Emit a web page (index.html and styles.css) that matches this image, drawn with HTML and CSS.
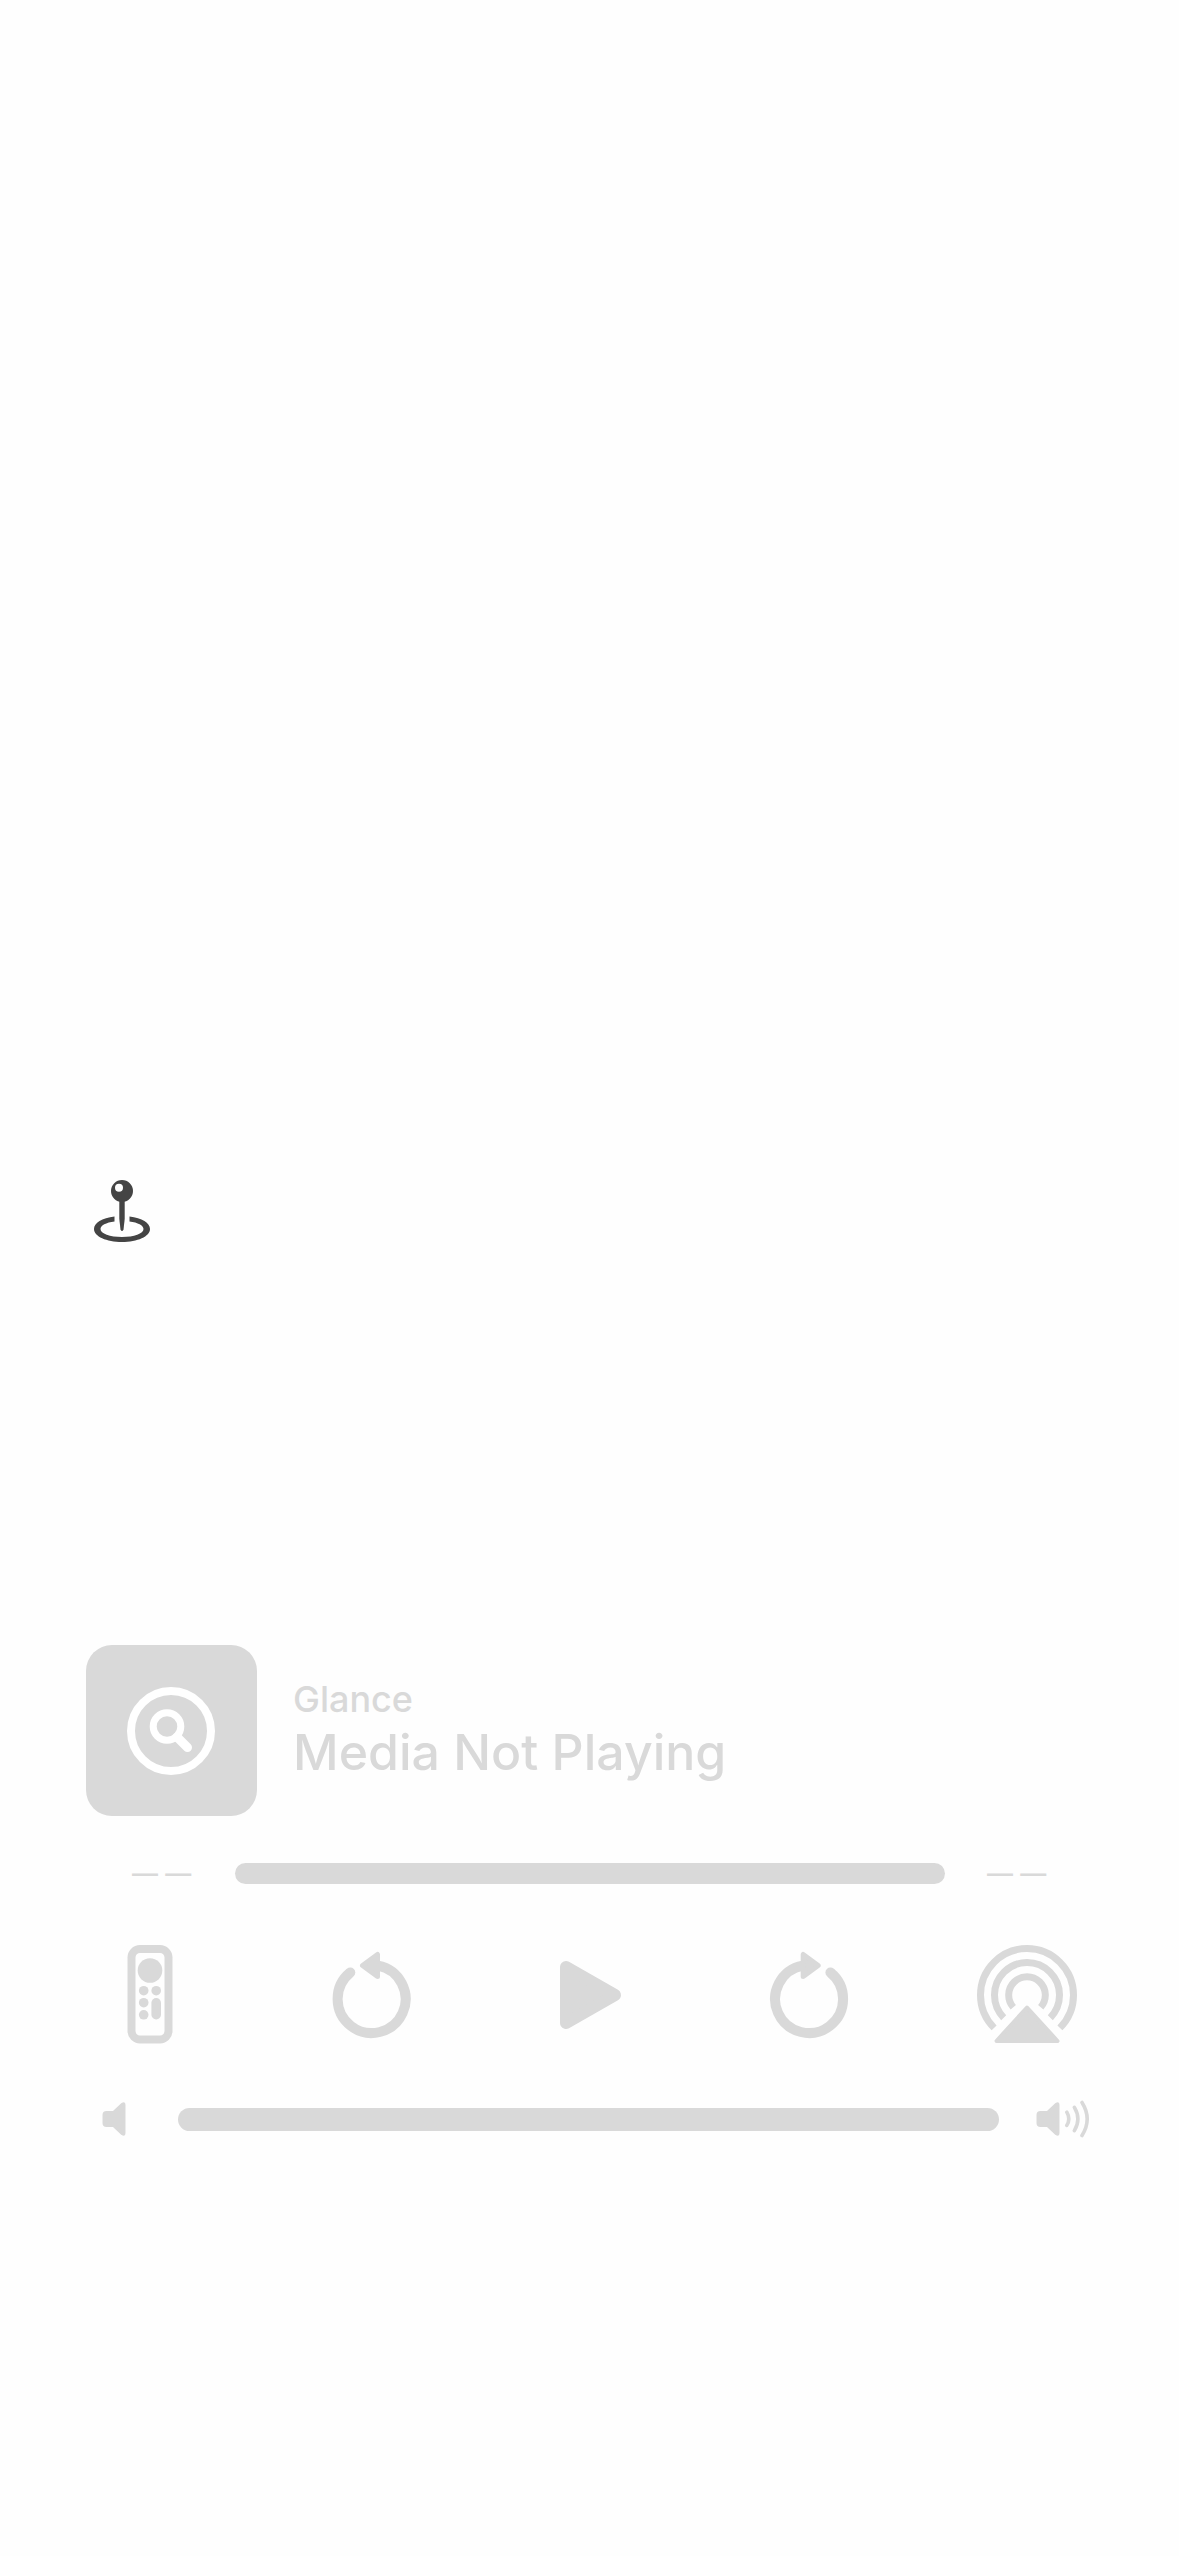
FILE: index.html
```html
<!DOCTYPE html>
<html lang="en">
<head>
<meta charset="utf-8">
<meta name="viewport" content="width=device-width, initial-scale=1">
<title>Glance</title>
<link rel="stylesheet" href="styles.css">
</head>
<body>
<main class="screen">
  <button class="icon-button joystick" type="button" aria-label="Joystick">
    <svg width="90" height="90" viewBox="0 0 90 90" fill="currentColor">
      <path fill-rule="evenodd" d="M42 15a11 11 0 1 0 0 22a11 11 0 1 0 0-22zM39 18.700a4 4 0 1 1 0 8a4 4 0 1 1 0-8z"/>
      <path d="M39.300 35h5.400v19l-1.200 10.500q-1.500 3-3 0L39.300 54z"/>
      <path d="M34.500 51.500C22 53 14 58 14 64c0 7.500 12.500 13 28 13s28-5.500 28-13c0-6-8-11-20.500-12.500v5C58 57.500 63.500 60.500 63.500 64c0 4.500-9.500 8-21.500 8s-21.500-3.500-21.500-8c0-3.500 5.500-6.500 14-7.500z"/>
    </svg>
  </button>

  <section class="player" aria-label="Media player">
    <header class="now-playing">
      <div class="artwork">
        <svg width="171" height="171" viewBox="0 0 171 171" fill="none" stroke="currentColor">
          <circle cx="85" cy="86" r="40" stroke-width="8"/>
          <circle cx="81" cy="81.500" r="13.800" stroke-width="7"/>
          <path d="M91 92l10.500 10.500" stroke-width="9" stroke-linecap="round"/>
        </svg>
      </div>
      <div class="titles">
        <p class="source">Glance</p>
        <h1 class="title">Media Not Playing</h1>
      </div>
    </header>

    <div class="progress">
      <span class="time">— —</span>
      <input class="slider" type="range" aria-label="Playback position" value="0">
      <span class="time">— —</span>
    </div>

    <div class="controls">
      <button class="icon-button" type="button" aria-label="Remote">
        <svg width="110" height="120" viewBox="-15 0 110 120" fill="currentColor">
          <rect x="21.500" y="19" width="37" height="90.500" rx="8.500" fill="none" stroke="currentColor" stroke-width="8"/>
          <circle cx="40" cy="40.500" r="12.300"/>
          <circle cx="33.700" cy="60.700" r="4.800"/>
          <circle cx="46.200" cy="60.700" r="4.800"/>
          <circle cx="33.700" cy="72.700" r="4.800"/>
          <circle cx="33.700" cy="84.800" r="4.800"/>
          <rect x="41.400" y="68" width="9.600" height="21.500" rx="4.800"/>
        </svg>
      </button>
      <button class="icon-button" type="button" aria-label="Skip back">
        <svg width="110" height="120" viewBox="-6 0 110 120" fill="none" stroke="currentColor">
          <path d="M30.300 42.500A34 34 0 1 0 58 35.600" stroke-width="10"/>
          <circle cx="30.300" cy="42.500" r="5" fill="currentColor" stroke="none"/>
          <path d="M42.500 35.500L57.500 24.500v22z" fill="currentColor" stroke-width="5" stroke-linejoin="round"/>
        </svg>
      </button>
      <button class="icon-button" type="button" aria-label="Play">
        <svg width="110" height="120" viewBox="-6 -10 110 120" fill="currentColor" stroke="currentColor">
          <path d="M26 27L75 55L26 83z" stroke-width="12" stroke-linejoin="round"/>
        </svg>
      </button>
      <button class="icon-button" type="button" aria-label="Skip forward">
        <svg width="110" height="120" viewBox="-2 0 110 120" fill="none" stroke="currentColor">
          <path d="M75.400 42.500A34 34 0 1 1 47.700 35.600" stroke-width="10"/>
          <circle cx="75.400" cy="42.500" r="5" fill="currentColor" stroke="none"/>
          <path d="M63.200 35.500L48.200 24.500v22z" fill="currentColor" stroke-width="5" stroke-linejoin="round"/>
        </svg>
      </button>
      <button class="icon-button" type="button" aria-label="AirPlay">
        <svg width="110" height="120" viewBox="12 0 110 120" fill="none" stroke="currentColor" stroke-width="7">
          <path d="M34.100 97.900A46.500 46.500 0 1 1 99.900 97.900"/>
          <path d="M43.700 87.700A32.500 32.500 0 1 1 90.300 87.700"/>
          <path d="M53.300 77.200A18.300 18.300 0 1 1 80.700 77.200"/>
          <path d="M67 77.500L97.500 111h-61z" fill="currentColor" stroke-width="4" stroke-linejoin="round"/>
        </svg>
      </button>
    </div>

    <div class="volume">
      <svg width="44" height="40" viewBox="20 19 44 40" fill="currentColor" aria-hidden="true">
        <path d="M26.500 31H33l8.200-7.700Q45.500 20.500 45.500 25v28q0 4.500-4.300 1.700L33 47h-6.500q-4 0-4-4v-8q0-4 4-4z"/>
      </svg>
      <input class="slider slider-volume" type="range" aria-label="Volume" value="0">
      <svg width="57" height="40" viewBox="73 19 57 40" fill="none" stroke="currentColor" stroke-width="3.600" stroke-linecap="round" aria-hidden="true">
        <path d="M80.500 31H87l8.200-7.700Q99.500 20.500 99.500 25v28q0 4.500-4.300 1.700L87 47h-6.500q-4 0-4-4v-8q0-4 4-4z" fill="currentColor" stroke="none"/>
        <path d="M106.800 32.200Q110.800 39 106.800 45.400M114.400 27.300Q121.400 39 114.400 50.600M122 22.500Q132.400 39 122 55.500"/>
      </svg>
    </div>
  </section>
</main>
</body>
</html>
```
FILE: styles.css
```css
* {
  box-sizing: border-box;
}

body {
  margin: 0;
  background: #fefefe;
  color: #d9d9d9;
  font-family: Inter, "Liberation Sans", sans-serif;
}

svg {
  display: block;
}

.screen {
  min-height: 100vh;
  padding-top: 1165px;
}

.icon-button {
  display: block;
  padding: 0;
  border: 0;
  background: none;
  color: inherit;
  cursor: pointer;
}

.joystick {
  margin-left: 80px;
  color: #444444;
}

.player {
  margin-top: 390px;
}

.now-playing {
  display: flex;
  align-items: center;
  gap: 36px;
  padding: 0 86px;
}

.artwork {
  flex: none;
  border-radius: 26px;
  background: #d9d9d9;
  color: #ffffff;
}

.titles {
  padding-bottom: 4px;
}

.source,
.title {
  margin: 0;
  font-weight: 500;
}

.source {
  font-size: 36px;
  line-height: 46px;
}

.title {
  font-size: 50px;
  line-height: 60px;
}

.progress {
  display: grid;
  grid-template-columns: 61px 1fr 61px;
  align-items: center;
  gap: 42px;
  margin-top: 42px;
  padding: 0 131px 0 132px;
}

.time {
  font: bold 26px/30px "Liberation Sans", sans-serif;
  white-space: nowrap;
}

.slider {
  appearance: none;
  width: 100%;
  min-width: 0;
  height: 21px;
  margin: 0;
  border-radius: 12px;
  background: #d9d9d9;
}

.slider::-webkit-slider-thumb {
  appearance: none;
  width: 1px;
  height: 1px;
}

.slider-volume {
  flex: 1;
  height: 23px;
}

.controls {
  display: flex;
  justify-content: space-between;
  margin-top: 42px;
  padding: 0 97px 0 95px;
}

.volume {
  display: flex;
  align-items: center;
  gap: 34px;
  margin-top: 49px;
  padding: 0 89px 0 100px;
}
```
